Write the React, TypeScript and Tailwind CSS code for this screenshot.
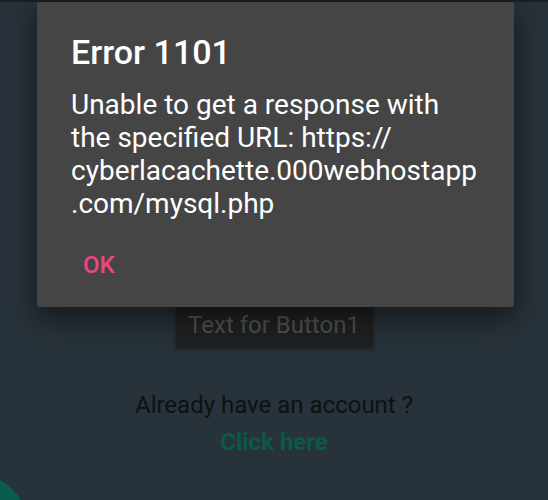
import React from "react";

export default function App() {
  return (
    <div
      className="relative w-[548px] h-[500px] overflow-hidden bg-[#28323a]"
      style={{ fontFamily: "Roboto, 'Noto Sans', sans-serif" }}
    >
      <div className="h-[2px] bg-[#1a2025]" />
      {/* background content */}
      <div className="flex flex-col items-center pt-[305px]">
        <div className="h-[40px] w-[197px] bg-[#1f2021] shadow-[0_2px_4px_rgba(0,0,0,0.4)] flex items-center justify-center pb-[4px] text-[24px] text-[#4f5152]">
          Text for Button1
        </div>
        <div className="mt-[43px] text-[24px] leading-[30px] text-[#0e1113]">
          Already have an account ?
        </div>
        <div className="mt-[7px] text-[24px] leading-[30px] font-bold text-[#0b5a48]">
          Click here
        </div>
      </div>
      <div className="absolute left-[-90px] top-[472px] w-[120px] h-[120px] rounded-full bg-[#0a5d4c]" />

      {/* dialog */}
      <div className="absolute left-[37px] top-[2px] w-[477px] h-[305px] bg-[#454545] rounded-[2px] shadow-[0_10px_30px_rgba(0,0,0,0.55)] px-[34px] pt-[30px]">
        <div className="text-[34px] leading-[40px] font-medium text-white">Error 1101</div>
        <div className="mt-[16px] text-[28px] leading-[33px] text-white">
          <div className="whitespace-nowrap">Unable to get a response with</div>
          <div className="whitespace-nowrap">the specified URL: https://</div>
          <div className="whitespace-nowrap">cyberlacachette.000webhostapp</div>
          <div className="whitespace-nowrap">.com/mysql.php</div>
        </div>
        <div className="mt-[31px] ml-[12px] text-[24px] leading-[28px] font-medium text-[#ec4680]">OK</div>
      </div>
    </div>
  );
}
